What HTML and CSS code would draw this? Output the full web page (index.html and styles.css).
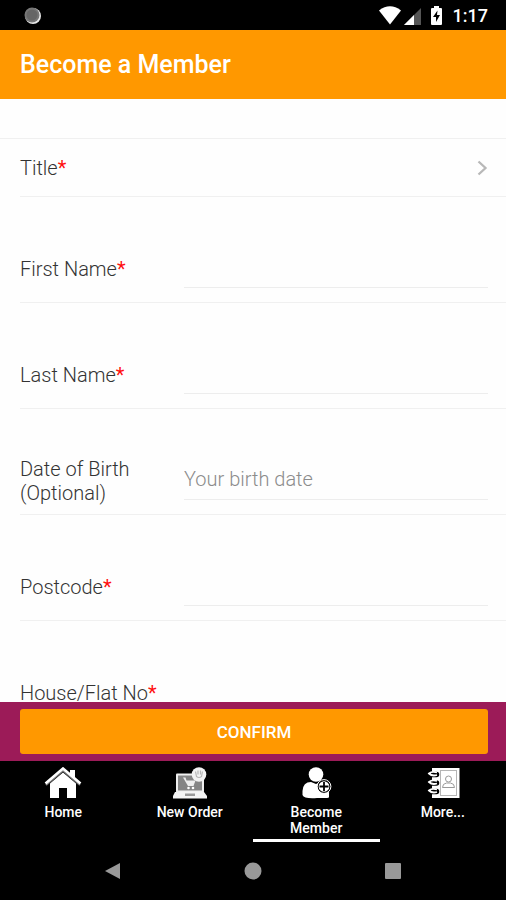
FILE: index.html
```html
<!DOCTYPE html>
<html lang="en">
<head>
<meta charset="utf-8">
<meta name="viewport" content="width=device-width, initial-scale=1">
<title>Become a Member</title>
<link rel="stylesheet" href="styles.css">
</head>
<body>
<div class="status">
  <svg class="status-dot" width="18" height="18" viewBox="0 0 18 18" aria-hidden="true"><circle cx="9" cy="9" r="8" fill="#e8e8e8"/><circle cx="8" cy="8" r="7.5" fill="#777"/><circle cx="8" cy="8" r="5.5" fill="#666"/></svg>
  <svg width="66" height="20" viewBox="0 0 66 20" aria-hidden="true">
    <path d="M0 4.5Q11-3.8 22 4.5L11 18.5Z" fill="#fff"/>
    <path d="M42 2V19H25Z" fill="#555"/><path d="M35 9V19H25Z" fill="#fff"/>
    <path d="M55 0h5v2h2q1 0 1 1v15q0 1-1 1h-9q-1 0-1-1V3q0-1 1-1h2Z" fill="#fff"/>
    <path d="M58.500 4.500L54 11h3v5l4-7h-3Z" fill="#000"/>
  </svg>
  <time class="clock">1:17</time>
</div>
<header class="header"><h1>Become a Member</h1></header>
<main class="content">
  <form id="member" class="form">
    <button type="button" class="picker">
      <span>Title<span class="required">*</span></span>
      <svg width="12" height="18" viewBox="0 0 12 18" aria-hidden="true"><path d="M1.500 2.500L8.500 9L1.500 15.500" fill="none" stroke="#b8b8b8" stroke-width="2.300"/></svg>
    </button>
    <div class="row"><label for="first">First Name<span class="required">*</span></label><input id="first" type="text"></div>
    <div class="row"><label for="last">Last Name<span class="required">*</span></label><input id="last" type="text"></div>
    <div class="row"><label for="birth">Date of Birth (Optional)</label><input id="birth" type="text" placeholder="Your birth date"></div>
    <div class="row"><label for="postcode">Postcode<span class="required">*</span></label><input id="postcode" type="text"></div>
    <div class="row"><label for="house">House/Flat No<span class="required">*</span></label><input id="house" type="text"></div>
  </form>
</main>
<div class="actions"><button type="submit" form="member" class="confirm">CONFIRM</button></div>
<nav class="tabs">
  <a href="#home" class="tab">
    <svg width="38" height="32" viewBox="0 0 38 32" aria-hidden="true">
      <path d="M6 16.500L19 5.500L32 16.500V31H23V21H15V31H6Z" fill="#fff"/>
      <path d="M26 3h5v9l-5-4Z" fill="#fff"/>
      <path d="M2 18L19 3.500L36 18" fill="none" stroke="#777" stroke-width="2"/>
      <path d="M1.500 16.500L19 1.500L36.500 16.500" fill="none" stroke="#fff" stroke-width="2.600"/>
    </svg>
    <span>Home</span>
  </a>
  <a href="#order" class="tab">
    <svg width="38" height="32" viewBox="0 0 38 32" aria-hidden="true">
      <rect x="5" y="6.500" width="28" height="19" rx="1" fill="#f0f0f0"/><rect x="7" y="8.500" width="24" height="15" fill="#858585"/>
      <path d="M4 25H33L36 29V31.500H2V29Z" fill="#f4f4f4"/><rect x="14" y="26.500" width="10" height="2.500" fill="#999"/>
      <path d="M12 10.500h2.500l1 3h9l-2 5.500h-5.500Z" fill="#eee"/><circle cx="17.500" cy="21" r="1.300" fill="#fff"/><circle cx="22" cy="21" r="1.300" fill="#fff"/>
      <circle cx="28" cy="7.500" r="7.300" fill="#f2f2f2"/><path d="M24.500 4.500l1 5q2.500 2 5 0l1-5M27 3.500v4M29.500 3.500v4" fill="none" stroke="#b5b5b5" stroke-width="1.200"/>
    </svg>
    <span>New Order</span>
  </a>
  <a href="#member" class="tab active" aria-current="page">
    <svg width="38" height="32" viewBox="0 0 38 32" aria-hidden="true">
      <circle cx="19" cy="7.500" r="7.300" fill="#fff"/>
      <path d="M5.500 28V24Q6 15 14 15L19 17L24 15Q32 16 32 26V30Q32 31 30 31H20Q7 32 5.500 28Z" fill="#fff"/>
      <circle cx="27" cy="19.500" r="6" fill="#fff" stroke="#000" stroke-width="1.300"/><circle cx="27" cy="19.500" r="6.900" fill="none" stroke="#fff"/>
      <path d="M27 15v9M22.500 19.500h9" stroke="#000" stroke-width="1.800"/>
    </svg>
    <span>Become<br>Member</span>
  </a>
  <a href="#more" class="tab">
    <svg width="38" height="32" viewBox="0 0 38 32" aria-hidden="true">
      <path d="M8 1H35.500V31H8Z" fill="#fff"/>
      <path d="M7 7.500h5.500M7 16h5.500M7 24.500h5.500" stroke="#000" stroke-width="5.500" stroke-linecap="round"/>
      <path d="M13 5.500Q8 4 5 6.500Q8 9.500 13 8M13 14Q8 12.500 5 15Q8 18 13 16.500M13 22.500Q8 21 5 23.500Q8 26.500 13 25" fill="none" stroke="#fff" stroke-width="1.800"/>
      <rect x="16.500" y="3.500" width="16" height="25" fill="#fff" stroke="#b5b5b5"/>
      <circle cx="24.500" cy="12" r="3" fill="none" stroke="#999"/><path d="M18.500 20.500q0-4 4-4.500h4q4 .5 4 4.500Z" fill="none" stroke="#999"/>
    </svg>
    <span>More...</span>
  </a>
</nav>
<div class="system">
  <button type="button" aria-label="Back"><svg width="18" height="18" viewBox="0 0 18 18"><path d="M1 9L16 1V17Z" fill="#999"/></svg></button>
  <button type="button" aria-label="Home screen"><svg width="18" height="18" viewBox="0 0 18 18"><circle cx="9" cy="9" r="8.500" fill="#999"/></svg></button>
  <button type="button" aria-label="Recent apps"><svg width="18" height="18" viewBox="0 0 18 18"><rect x="1" y="1" width="16" height="16" rx="1" fill="#999"/></svg></button>
</div>
</body>
</html>
```
FILE: styles.css
```css
* { box-sizing: border-box; }

body {
  margin: 0;
  height: 100vh;
  display: flex;
  flex-direction: column;
  overflow: hidden;
  background: #fefefe;
  color: #333;
  font-family: Roboto, sans-serif;
  font-size: 20px;
  font-weight: 300;
  line-height: 24px;
}

button, input { font: inherit; color: inherit; }

button { border: 0; background: none; padding: 0; }

svg { display: block; flex: none; }

.status {
  display: flex;
  align-items: center;
  gap: 8px;
  padding: 2px 18px 0 24px;
  height: 30px;
  background: #000;
  color: #fff;
}

.status-dot { margin-right: auto; }

.clock { font-size: 18px; font-weight: 500; }

.header {
  display: flex;
  align-items: center;
  height: 69px;
  padding: 0 20px;
  background: #ff9800;
  color: #fff;
}

h1 {
  margin: 0;
  font-size: 25px;
  font-weight: 500;
}

.content {
  flex: 1;
  min-height: 0;
  overflow: hidden;
  padding-top: 39px;
}

.form { border-top: 1px solid #f0f0f0; }

.picker, .row {
  margin-left: 20px;
  border-bottom: 1px solid #f0f0f0;
}

.picker {
  display: flex;
  align-items: center;
  justify-content: space-between;
  width: calc(100% - 20px);
  height: 58px;
  padding-right: 17px;
}

.row {
  display: grid;
  grid-template-columns: 164px 1fr;
  align-items: center;
  height: 106px;
  padding: 38px 18px 0 0;
}

.row label:not(:has(.required)) { padding-right: 44px; }

.row input {
  width: 100%;
  height: 38px;
  padding: 0 0 3px;
  border: 0;
  border-bottom: 1px solid #ededed;
  border-radius: 0;
  background: none;
  outline: 0;
}

.row input::placeholder { color: #8c8c8c; opacity: 1; }

.required { color: #ff1010; font-weight: 400; }

.actions {
  padding: 7px 18px 7px 20px;
  background: #9c1b58;
}

.confirm {
  display: block;
  width: 100%;
  height: 45px;
  border-radius: 3px;
  background: #ff9800;
  color: #fff;
  font-size: 17px;
  font-weight: 500;
}

.tabs {
  display: grid;
  grid-template-columns: repeat(4, 1fr);
  height: 81px;
  background: #000;
}

.tab {
  display: flex;
  flex-direction: column;
  align-items: center;
  gap: 5px;
  padding-top: 6px;
  border-bottom: 3px solid transparent;
  color: #fff;
  font-size: 14px;
  font-weight: 500;
  line-height: 16px;
  text-align: center;
  text-decoration: none;
}

.active { border-color: #fff; }

.system {
  display: flex;
  align-items: center;
  justify-content: center;
  gap: 122px;
  height: 58px;
  background: #000;
}
```
